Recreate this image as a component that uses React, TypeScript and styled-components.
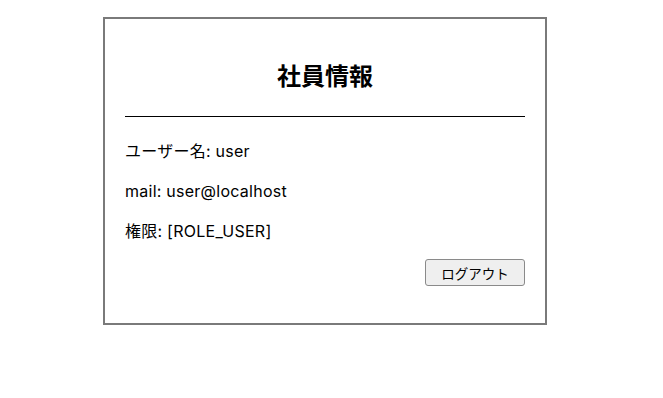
import React from "react";
import styled, { createGlobalStyle } from "styled-components";

const Global = createGlobalStyle`
  html, body { margin: 0; padding: 0; background: #fff; }
  body { font-family: "Inter", "Noto Sans CJK JP", sans-serif; color: #000; }
`;

const Page = styled.div`
  padding: 17px 0 0 103px;
`;

const Card = styled.div`
  width: 400px;
  border: 2px solid #7a7a7a;
  padding: 20px 20px 37px;
`;

const Title = styled.h1`
  margin: 20px 0 21px;
  font-family: "Liberation Sans", "Noto Sans CJK JP", sans-serif;
  font-size: 24px;
  line-height: 36px;
  font-weight: bold;
  text-align: center;
`;

const Rule = styled.hr`
  margin: 0;
  border: none;
  border-top: 1px solid #000;
  height: 0;
`;

const InfoList = styled.div`
  display: flex;
  flex-direction: column;
  gap: 16px;
  margin-top: 22px;
`;

const InfoLine = styled.p`
  margin: 0;
  font-size: 16px;
  line-height: 24px;
  letter-spacing: 0.25px;
`;

const Actions = styled.div`
  display: flex;
  justify-content: flex-end;
  margin-top: 16px;
`;

const Button = styled.button`
  width: 100px;
  height: 27px;
  background: #efefef;
  border: 1px solid #8a8a8a;
  border-radius: 3px;
  font-family: "Liberation Sans", "Noto Sans CJK JP", sans-serif;
  font-size: 13.5px;
  color: #000;
  padding: 0;
`;

export default function App() {
  return (
    <>
      <Global />
      <Page>
        <Card>
          <Title>社員情報</Title>
          <Rule />
          <InfoList>
            <InfoLine>ユーザー名: user</InfoLine>
            <InfoLine>mail: user@localhost</InfoLine>
            <InfoLine>権限: [ROLE_USER]</InfoLine>
          </InfoList>
          <Actions>
            <Button>ログアウト</Button>
          </Actions>
        </Card>
      </Page>
    </>
  );
}
